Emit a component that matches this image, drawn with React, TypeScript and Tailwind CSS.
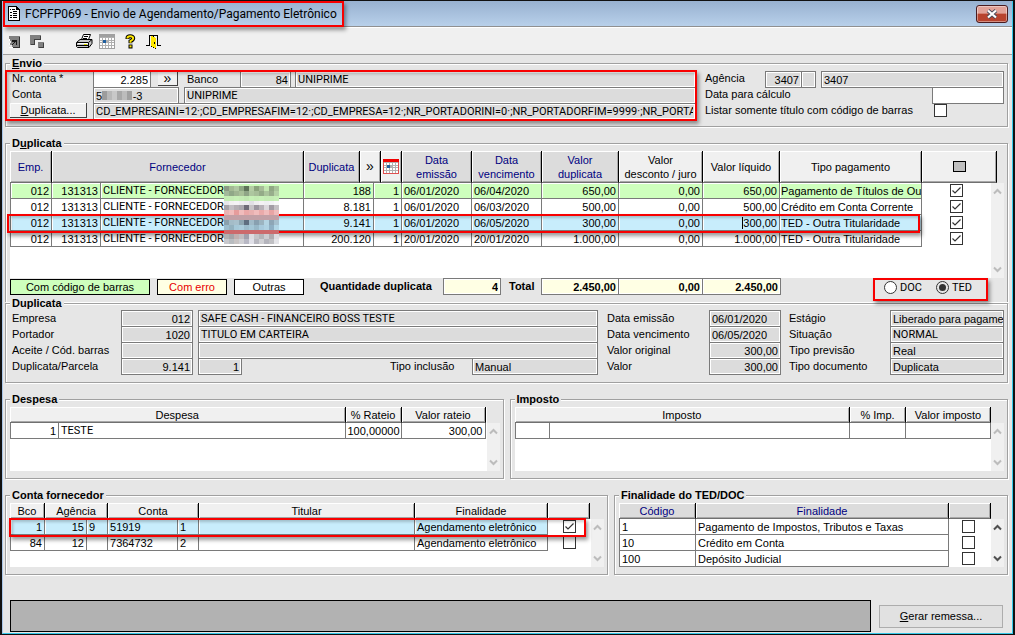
import React, { useState } from 'react';
import clsx from 'clsx';

interface Duplicata {
  numero: string;
  emissao: string;
  vencimento: string;
  valor: string;
  tipo: string;
  color: string;
}

const duplicatas: Duplicata[] = [
  { numero: '188', emissao: '06/01/2020', vencimento: '06/04/2020', valor: '650,00', tipo: 'Pagamento de Títulos de Ou', color: 'bg-[#ceffbd]' },
  { numero: '8.181', emissao: '06/01/2020', vencimento: '06/03/2020', valor: '500,00', tipo: 'Crédito em Conta Corrente', color: 'bg-white' },
  { numero: '9.141', emissao: '06/01/2020', vencimento: '06/05/2020', valor: '300,00', tipo: 'TED - Outra Titularidade', color: 'bg-[#c8edfc]' },
  { numero: '200.120', emissao: '20/01/2020', vencimento: '20/01/2020', valor: '1.000,00', tipo: 'TED - Outra Titularidade', color: 'bg-white' },
];

const contas = [
  { bco: '1', agencia: '15', dvAgencia: '9', conta: '51919', dvConta: '1', checked: true, color: 'bg-[#c8edfc]' },
  { bco: '84', agencia: '12', dvAgencia: '', conta: '7364732', dvConta: '2', checked: false, color: 'bg-white' },
];

const finalidades = [
  { codigo: '1', nome: 'Pagamento de Impostos, Tributos e Taxas' },
  { codigo: '10', nome: 'Crédito em Conta' },
  { codigo: '100', nome: 'Depósito Judicial' },
];

// supplier names are censored with a pixel mosaic
const mosaic = [
  ['#8b9a84', '#a3b994', '#b0c8a2', '#8fa884', '#5f7458', '#b4cca4', '#8ba37c', '#a6bb98', '#c2e6b0', '#90a884', '#a8c49a'],
  ['#a2b89a', '#90a888', '#9fb592', '#a8c098', '#8fa586', '#adc69f', '#a6bd98', '#94ab88', '#aac49c', '#98ae8c', '#b5d2a6'],
  ['#c4ecb4', '#c4ecb4', '#c6f0b6', '#c4ecb4', '#c0e8b0', '#c6f0b6', '#c4ecb4', '#c6f0b6', '#c4ecb4', '#c4ecb4', '#c6f0b6'],
  ['#e8e6ea', '#f2f0f2', '#f4f2f6', '#efedf2', '#eceaf0', '#e2e0e6', '#efedf0', '#f4f2f4', '#efeff2', '#f2f2f4', '#f8f8f8'],
  ['#a8a4aa', '#c2bec4', '#b4aeb4', '#aaa6ae', '#6e6a78', '#c8c4c8', '#9c96a0', '#b8b2b8', '#dcd8dc', '#a29ca4', '#c4c0c4'],
  ['#e8b4b4', '#f0bcbc', '#e69c9c', '#f0bcbc', '#eaa8a8', '#e8b0b0', '#f0bcbc', '#eaaaaa', '#f0bcbc', '#e8a4a4', '#f0bcbc'],
  ['#c2a0a6', '#c2a0a6', '#c2a0a6', '#c2a0a6', '#c2a0a6', '#c2a0a6', '#c2a0a6', '#c2a0a6', '#c2a0a6', '#c2a0a6', '#c2a0a6'],
  ['#8aa0ac', '#a4bcc8', '#a8c0cc', '#8ea6b2', '#5e6e80', '#a0bac8', '#88a0b0', '#9cb4c0', '#b4d4e2', '#8ea6b6', '#a6c0ce'],
  ['#9cbccc', '#94b2c0', '#a6c8d8', '#aaccdc', '#9cbccc', '#a4c6d6', '#98b8c8', '#a8cadc', '#b0d2e2', '#90b0c4', '#b2d6e6'],
  ['#cc6a6c', '#cc6a6c', '#cc6a6c', '#cc6a6c', '#cc6a6c', '#cc6a6c', '#cc6a6c', '#cc6a6c', '#cc6a6c', '#cc6a6c', '#cc6a6c'],
  ['#b0b0b0', '#a4a4a8', '#c0b0b0', '#c0bcc0', '#a0a0ac', '#dcdce0', '#c4c4c8', '#b4b4b8', '#ccccd0', '#b0acb0', '#dcdce0'],
  ['#c8c8cc', '#b8bcc0', '#c8c4c4', '#d0d0d4', '#b8b8c4', '#e0e0e8', '#b8b8c0', '#d0d0d4', '#b4b4bc', '#c0c0c4', '#e4e4e8'],
];

const caps = 'font-[family-name:Roboto]';

interface GroupProps {
  title: React.ReactNode;
  className?: string;
  children: React.ReactNode;
}

const Group: React.FC<GroupProps> = ({ title, className, children }) => (
  <fieldset className={clsx('min-w-0 border border-[#a0a0a0] pl-1 pr-[3px] shadow-[1px_1px_0_#fff,inset_1px_1px_0_#fff]', className)}>
    <legend className="bg-[#e6e6e6] px-0.5 leading-[14px] font-bold">{title}</legend>
    {children}
  </fieldset>
);

interface FieldProps {
  id?: string;
  label?: string;
  value?: string;
  className?: string;
}

const Field: React.FC<FieldProps> = ({ id, label, value = '', className }) => (
  <input
    id={id}
    aria-label={label}
    type="text"
    defaultValue={value}
    className={clsx('h-[17px] min-w-0 border border-[#7a7a7a] px-0.5 shadow-[inset_0_0_0_1px_#fff] outline-none', className)}
  />
);

const Check: React.FC<{ id?: string; label?: string; checked?: boolean }> = ({ id, label, checked }) => (
  <span className="relative inline-block size-[13px] align-top">
    <input id={id} aria-label={label} type="checkbox" defaultChecked={checked} className="peer block size-[13px] appearance-none border border-[#333] bg-white" />
    <svg viewBox="0 0 13 13" className="pointer-events-none absolute inset-0 hidden size-[13px] peer-checked:block">
      <path d="M2.5 6.5 5 9l5.5-5.5" fill="none" stroke="#333" strokeWidth="1.2" />
    </svg>
  </span>
);

const Highlight: React.FC<{ className: string }> = ({ className }) => (
  <div className={clsx('pointer-events-none absolute z-10 border-2 border-[#f80000] shadow-[2px_3px_4px_rgba(0,0,0,0.4),inset_2px_2px_3px_rgba(0,0,0,0.2)]', className)} />
);

interface ThProps {
  blue?: boolean;
  colSpan?: number;
  className?: string;
  children?: React.ReactNode;
}

const Th: React.FC<ThProps> = ({ blue, colSpan, className, children }) => (
  <th
    colSpan={colSpan}
    className={clsx(
      'border-r border-b border-r-black border-b-[#707070] p-0 font-normal shadow-[inset_1px_1px_0_#fff,inset_-1px_-1px_0_#a8a8a8]',
      blue ? 'bg-[#dcdcdc] text-[#000080]' : 'bg-[#f0f0f0]',
      className,
    )}
  >
    {children}
  </th>
);

interface TdProps {
  right?: boolean;
  colSpan?: number;
  className?: string;
  children?: React.ReactNode;
}

const Td: React.FC<TdProps> = ({ right, colSpan, className, children }) => (
  <td
    colSpan={colSpan}
    className={clsx(
      'overflow-hidden border-r border-b border-[#7a7a7a] px-0.5 pt-px pb-0 leading-[14px] whitespace-nowrap shadow-[inset_1px_1px_0_#fff] first:border-l',
      right && 'text-right',
      className,
    )}
  >
    {children}
  </td>
);

const Scroll: React.FC<{ className: string; active?: boolean }> = ({ className, active }) => (
  <div className={clsx('absolute right-0 bottom-0 flex w-[13px] flex-col items-center justify-between bg-[#f0f0f0] py-1', active ? 'text-[#505050]' : 'text-[#bcbcbc]', className)}>
    <svg width="9" height="9" viewBox="0 0 9 9"><path d="M1 6.5 4.5 3 8 6.5" fill="none" stroke="currentColor" strokeWidth="2" /></svg>
    <svg width="9" height="9" viewBox="0 0 9 9"><path d="M1 2.5 4.5 6 8 2.5" fill="none" stroke="currentColor" strokeWidth="2" /></svg>
  </div>
);

const Corner: React.FC<{ className: string }> = ({ className }) => (
  <div className={clsx('absolute top-0 right-0 bg-[#e6e6e6]', className)} />
);

const CalendarIcon: React.FC<{ top?: string }> = ({ top = '#a0a0a0' }) => (
  <svg width="16" height="15" viewBox="0 0 16 15" shapeRendering="crispEdges">
    <path fill={top === '#a0a0a0' ? top : '#e05050'} d="M0 0h16v15H0z" />
    <path fill="#b0b0b0" d="M1 3h14v11H1z" />
    <path fill="#fff" d="M1 4h2v2H1zM4 4h2v2H4zM7 4h2v2H7zM10 4h2v2h-2zM13 4h2v2h-2zM1 7h2v1H1zM4 7h2v1H4zM10 7h2v1h-2zM13 7h2v1h-2zM1 9h2v2H1zM4 9h2v2H4zM7 9h2v2H7zM10 9h2v2h-2zM13 9h2v2h-2zM1 12h2v2H1zM4 12h2v2H4zM7 12h2v2H7zM10 12h2v2h-2zM13 12h2v2h-2z" />
    <path fill={top} d="M0 0h16v3H0z" />
    <path fill="#1f5f9f" d="M4 6h3v3H4z" />
  </svg>
);

const toolButtons = [
  {
    label: 'Restaurar',
    className: 'w-[12px]',
    icon: (
      <svg width="12" height="12" viewBox="0 0 12 12" shapeRendering="crispEdges">
        <path fill="#808080" d="M0 0h11v11H0z" />
        <path fill="#303030" d="M10 1h1v11H3v-1h7z" />
        <path fill="#fff" d="M0 3h1v9H0zM1 11h3v1H1z" />
        <path fill="#1a1a1a" d="M3 4h5v5H7V6H6v1H5v1H4v1H3v1H2V9h1V8h1V7h1V6H3z" />
        <path fill="#e8e8e8" d="M0 5h2v2H0zM0 9h3v2H0z" />
      </svg>
    ),
  },
  {
    label: 'Janelas',
    className: 'ml-[9px] w-[15px]',
    icon: (
      <svg width="15" height="14" viewBox="0 0 15 14" shapeRendering="crispEdges">
        <path fill="#808080" d="M0 0h11v5H5v5H0z" />
        <path fill="#404040" d="M10 1h1v4H5v5H1V9h3V4h6z" />
        <path fill="#808080" d="M8 7h6v6H8z" />
        <path fill="#404040" d="M13 8h1v5H9v-1h4z" />
      </svg>
    ),
  },
  {
    label: 'Imprimir',
    className: 'ml-[31px] w-[17px]',
    icon: (
      <svg width="17" height="15" viewBox="0 0 17 15">
        <path fill="#fff" stroke="#000" d="M5.5 5.5 7.500 .5h7l-2 5z" />
        <path stroke="#000" d="M8 2.500h4M7 4.500h4" />
        <path fill="#c8c8c8" stroke="#000" d="M.5 8.500 4 5.500h10l2 0v4l-3 4H1.500l-1-1z" />
        <path stroke="#000" d="M1 8.500h11.500L16 5.500M12.500 9v4M1 11.500h11" fill="none" />
        <path fill="#fff" d="M2 9h10v1H2z" />
        <path fill="#d8d800" d="M8 10h3v1H8z" />
      </svg>
    ),
  },
  { label: 'Calendário', className: 'ml-[6px] w-[16px]', icon: <CalendarIcon /> },
  {
    label: 'Ajuda',
    className: 'ml-[10px] w-[11px]',
    icon: (
      <svg width="11" height="15" viewBox="0 0 11 15">
        <path fill="none" stroke="#000" strokeWidth="4" d="M2.500 5V4Q2.500 2.200 5.200 2.200T8.200 4.200Q8.200 5.800 5.500 7.200V9.200" />
        <path fill="#000" d="M3.500 10.500h4v4h-4z" />
        <path fill="none" stroke="#ffe800" strokeWidth="2" d="M2.500 4.600V4Q2.500 2.200 5.200 2.200T8.200 4.200Q8.200 5.800 5.500 7.200V8.800" />
        <path fill="#ffe800" d="M4.500 11.400h2v2h-2z" />
      </svg>
    ),
  },
  {
    label: 'Sair',
    className: 'ml-[10px] w-[15px]',
    icon: (
      <svg width="15" height="14" viewBox="0 0 15 14" shapeRendering="crispEdges">
        <path fill="#000" d="M3 0h9v10h3v1h-4v-1H4v1H0v-1h3z" />
        <path fill="#f0f0f0" d="M8 1h3v9H8zM4 1h1v9H4z" />
        <path fill="#000" d="M4 1h1v11h2v1h2v1h1V3H8V2H6V1z" />
        <path fill="#ffe800" d="M5 1h2v1h2v1h1v10H8v-1H6v-1H5z" />
        <path fill="#000" d="M8 7h1v2H8z" />
      </svg>
    ),
  },
];

const App: React.FC = () => {
  const [modo, setModo] = useState('TED');

  return (
    <div className="flex min-h-screen flex-col border-t border-r-2 border-b border-l-2 border-[#111] bg-[#e6e6e6] font-['Liberation_Sans',Arial,sans-serif] text-[11px] leading-[14px] text-black">
      <div className="flex flex-1 flex-col border-r border-b border-l border-[#35c8e8] border-l-[#a9c6e8]">
        <header className="flex h-[26px] items-center justify-between border-b border-[#909090] bg-linear-to-b from-[#98b1d0] to-[#b8d0ea] pr-1">
          <h1 className="z-10 flex h-[26px] w-[341px] items-center gap-[5px] border-2 border-[#f80000] pl-[3px] font-['Roboto',sans-serif] text-[12px] whitespace-nowrap shadow-[2px_3px_4px_rgba(0,0,0,0.4)]">
            <svg width="12" height="15" viewBox="0 0 12 15" shapeRendering="crispEdges" className="shrink-0">
              <path fill="#000" d="M0 0h9v1h1v1h1v1h1v12H0z" />
              <path fill="#fff" d="M1 1h7v3h3v10H1z" />
              <path fill="#000" d="M2 3h1v1H2zM4 3h3v1H4zM5 5h4v1H5zM2 6h2v1H2zM5 7h4v1H5zM2 9h2v1H2zM5 9h4v1H5zM2 11h2v1H2zM5 11h4v1H5z" />
            </svg>
            FCPFP069 - Envio de Agendamento/Pagamento Eletrônico
          </h1>
          <button aria-label="Fechar" className="flex h-[18px] w-8 items-center justify-center rounded-[3px] border border-[#4a1c20] bg-linear-to-b from-[#e2a298] from-45% to-[#b8432e] to-50% shadow-[inset_0_0_0_1px_rgba(255,255,255,0.4)]">
            <svg width="12" height="10" viewBox="0 0 12 10">
              <path d="M2 1.500l8 7M10 1.500l-8 7" stroke="#4a4a5a" strokeWidth="4" />
              <path d="M2 1.500l8 7M10 1.500l-8 7" stroke="#fff" strokeWidth="2.200" />
            </svg>
          </button>
        </header>

        <div className="flex h-7 items-center border-t border-b border-t-white border-b-[#a0a0a0] bg-[#f0f0f0] pt-px pl-[6px]">
          {toolButtons.map((b) => (
            <button key={b.label} aria-label={b.label} className={clsx('flex h-5 items-center', b.className)}>{b.icon}</button>
          ))}
        </div>

        <main className="flex flex-1 flex-col px-0.5 pt-px pr-1">
          <Group title={<><u>E</u>nvio</>} className="pb-[7px]">
            <div className="flex pt-px">
              <div className="relative min-w-0 flex-1">
                <Highlight className="-top-px -right-px -bottom-[2px] -left-[5px]" />
                <div className="flex h-4">
                  <label htmlFor="nr-conta" className="w-[83px] pl-0.5">Nr. conta *</label>
                  <Field id="nr-conta" value="2.285" className="w-[58px] bg-white text-right" />
                  <button aria-label="Buscar conta" className="ml-[7px] flex h-[15px] w-5 items-center justify-center border-r border-b border-[#404040] bg-[#f0f0f0] text-[14px] leading-3">»</button>
                  <label htmlFor="banco" className="w-[62px] border-t border-[#a0a0a0] pl-[9px]">Banco</label>
                  <Field id="banco" value="84" className="w-[51px] bg-[#dcdcdc] text-right" />
                  <Field label="Nome do banco" value="UNIPRIME" className={clsx('ml-1 flex-1 bg-[#dcdcdc]', caps)} />
                </div>
                <div className="flex h-4">
                  <label htmlFor="conta" className="w-[83px] pl-0.5">Conta</label>
                  <div className="relative w-[86px]">
                    <Field id="conta" value={'5\u00a0\u00a0\u00a0\u00a0\u00a0\u00a0\u00a0\u00a0\u00a0\u00a0-3'} className="w-full bg-[#dcdcdc]" />
                    <div className="absolute top-[4px] left-[9px] flex h-[9px] w-[30px]">
                      <span className="flex-1 bg-[#9c9c9c]" />
                      <span className="flex-1 bg-[#b8b8b8]" />
                      <span className="flex-1 bg-[#c8c8c8]" />
                      <span className="flex-1 bg-[#a8a8a8]" />
                      <span className="flex-1 bg-[#bcbcbc]" />
                      <span className="flex-1 bg-[#a0a0a0]" />
                    </div>
                  </div>
                  <Field label="Nome da conta" value="UNIPRIME" className={clsx('ml-[5px] flex-1 bg-[#dcdcdc]', caps)} />
                </div>
                <div className="flex h-4">
                  <button className="h-[15px] w-[77px] border-r border-b border-[#404040] bg-[#f0f0f0] leading-[14px] shadow-[inset_1px_1px_0_#fff]"><u>D</u>uplicata...</button>
                  <Field
                    label="Filtro de duplicatas"
                    value="CD_EMPRESAINI=12·;CD_EMPRESAFIM=12·;CD_EMPRESA=12·;NR_PORTADORINI=0·;NR_PORTADORFIM=9999·;NR_PORTAD"
                    className={clsx('ml-[6px] flex-1 bg-[#dcdcdc]', caps)}
                  />
                </div>
              </div>
              <div className="ml-[9px] w-[299px]">
                <div className="flex h-4">
                  <label htmlFor="agencia" className="w-[60px]">Agência</label>
                  <Field id="agencia" value="3407" className="w-[37px] bg-[#dcdcdc] text-right" />
                  <Field label="Dígito da agência" className="-ml-px w-[15px] bg-[#dcdcdc]" />
                  <Field label="Nome da agência" value="3407" className="ml-[5px] flex-1 bg-[#dcdcdc]" />
                </div>
                <div className="flex h-4 justify-between">
                  <label htmlFor="data-calculo">Data para cálculo</label>
                  <Field id="data-calculo" className="w-[72px] bg-white" />
                </div>
                <div className="flex h-4">
                  <label htmlFor="listar" className="w-[229px]">Listar somente título com código de barras</label>
                  <span className="pt-px"><Check id="listar" /></span>
                </div>
              </div>
            </div>
          </Group>

          <Group title={<>D<u>u</u>plicata</>} className="mt-[9px] border-b-0 pb-[7px]">
            <div className="relative mt-px min-h-[127px] bg-white pr-[7px]">
              <Corner className="h-8 w-[7px]" />
              <Scroll className="top-8" />
              <Highlight className="top-[63px] right-[84px] -left-[3px] h-[19px]" />
              <svg width="55" height="58" viewBox="0 0 55 60" preserveAspectRatio="none" shapeRendering="crispEdges" className="absolute top-[35px] left-[214px] z-20">
                {mosaic.map((row, y) => row.map((fill, x) => <rect key={`${x}-${y}`} x={x * 5} y={y * 5} width="5" height="5" fill={fill} />))}
              </svg>
              <table className="w-full table-fixed border-separate border-spacing-0">
                <colgroup>
                  <col className="w-[42px]" />
                  <col className="w-[49px]" />
                  <col />
                  <col className="w-[56px]" />
                  <col className="w-[14px]" />
                  <col className="w-[7px]" />
                  <col className="w-[21px]" />
                  <col className="w-[70px]" />
                  <col className="w-[70px]" />
                  <col className="w-[77px]" />
                  <col className="w-[84px]" />
                  <col className="w-[77px]" />
                  <col className="w-[142px]" />
                  <col className="w-[75px]" />
                </colgroup>
                <thead>
                  <tr className="h-8">
                    <Th blue>Emp.</Th>
                    <Th blue colSpan={2}>Fornecedor</Th>
                    <Th blue>Duplicata</Th>
                    <Th colSpan={2}><button aria-label="Buscar duplicata" className="text-[14px]">»</button></Th>
                    <Th><button aria-label="Calendário" className="flex w-full justify-center"><CalendarIcon top="#f00000" /></button></Th>
                    <Th blue>Data<br />emissão</Th>
                    <Th blue>Data<br />vencimento</Th>
                    <Th blue>Valor<br />duplicata</Th>
                    <Th>Valor<br />desconto / juro</Th>
                    <Th>Valor líquido</Th>
                    <Th>Tipo pagamento</Th>
                    <Th><button aria-label="Marcar todos" className="mx-auto block h-[11px] w-[13px] border border-black bg-[#c0c0c0]" /></Th>
                  </tr>
                </thead>
                <tbody>
                  {duplicatas.map((d, i) => (
                    <tr key={d.numero} className="h-4">
                      <Td right className={d.color}>012</Td>
                      <Td right className={d.color}>131313</Td>
                      <Td className={clsx(d.color, caps)}>CLIENTE - FORNECEDOR</Td>
                      <Td right colSpan={2} className={d.color}>{d.numero}</Td>
                      <Td right colSpan={2} className={d.color}>1</Td>
                      <Td className={d.color}>{d.emissao}</Td>
                      <Td className={d.color}>{d.vencimento}</Td>
                      <Td right className={d.color}>{d.valor}</Td>
                      <Td right className={d.color}>0,00</Td>
                      <Td right className={d.color}>
                        {i === 2 ? <span className="border-l border-black">{d.valor}</span> : d.valor}
                      </Td>
                      <Td className={clsx('pr-0 pl-px', d.color)}>{d.tipo}</Td>
                      <td className="p-0 pt-px pr-[7px] text-center align-top leading-[14px]"><Check label={`Selecionar ${d.numero}`} checked /></td>
                    </tr>
                  ))}
                </tbody>
              </table>
            </div>
            <div className="flex h-[17px] items-start">
              <span className="mt-px w-[140px] border border-black bg-[#ceffbd] text-center">Com código de barras</span>
              <span className="mt-px ml-[7px] w-[70px] border border-black bg-[#ffffe4] text-center text-[#e80000]">Com erro</span>
              <span className="mt-px ml-[7px] w-[70px] border border-black bg-white text-center">Outras</span>
              <label htmlFor="quantidade" className="ml-4 w-[123px] pt-px font-bold">Quantidade duplicata</label>
              <Field id="quantidade" value="4" className="w-[58px] bg-[#ffffe4] text-right font-bold" />
              <label htmlFor="total" className="ml-2 w-8 pt-px font-bold">Total</label>
              <Field id="total" value="2.450,00" className="w-[78px] bg-[#ffffe4] text-right font-bold" />
              <Field label="Total desconto" value="0,00" className="-ml-px w-[85px] bg-[#ffffe4] text-right font-bold" />
              <Field label="Total líquido" value="2.450,00" className="-ml-px w-[79px] bg-[#ffffe4] text-right font-bold" />
              <div className="z-10 mr-4 ml-auto flex h-[23px] w-[115px] shrink-0 items-center gap-[14px] border-2 border-[#f80000] pb-1 pl-[9px] shadow-[2px_3px_4px_rgba(0,0,0,0.4)]">
                {['DOC', 'TED'].map((m) => (
                  <label key={m} className={clsx('flex items-center gap-[3px]', caps)}>
                    <input
                      type="radio"
                      name="modo"
                      checked={modo === m}
                      onChange={() => setModo(m)}
                      className="size-[13px] appearance-none rounded-full border border-[#333] bg-white p-0.5 checked:bg-[#333] checked:bg-clip-content"
                    />
                    {m}
                  </label>
                ))}
              </div>
            </div>
          </Group>

          <Group title="Duplicata" className="-mt-[6px] pb-2">
            <div className="flex">
              <div className="flex-1">
                <div className="flex h-4">
                  <label htmlFor="empresa" className="w-[111px] pt-px pl-0.5">Empresa</label>
                  <Field id="empresa" value="012" className="w-[72px] bg-[#dcdcdc] text-right" />
                  <Field label="Nome da empresa" value="SAFE CASH - FINANCEIRO BOSS TESTE" className={clsx('ml-[5px] flex-1 bg-[#dcdcdc]', caps)} />
                </div>
                <div className="flex h-4">
                  <label htmlFor="portador" className="w-[111px] pt-px pl-0.5">Portador</label>
                  <Field id="portador" value="1020" className="w-[72px] bg-[#dcdcdc] text-right" />
                  <Field label="Nome do portador" value="TITULO EM CARTEIRA" className={clsx('ml-[5px] flex-1 bg-[#dcdcdc]', caps)} />
                </div>
                <div className="flex h-4">
                  <label htmlFor="aceite" className="w-[111px] pt-px pl-0.5">Aceite / Cód. barras</label>
                  <Field id="aceite" className="w-[72px] bg-[#dcdcdc]" />
                  <Field label="Código de barras" className="ml-[5px] flex-1 bg-[#dcdcdc]" />
                </div>
                <div className="flex h-4">
                  <label htmlFor="parcela" className="w-[111px] pt-px pl-0.5">Duplicata/Parcela</label>
                  <Field id="parcela" value="9.141" className="w-[72px] bg-[#dcdcdc] text-right" />
                  <Field label="Parcela" value="1" className="ml-[5px] w-[44px] bg-[#dcdcdc] text-right" />
                  <label htmlFor="inclusao" className="ml-auto w-[82px] pt-px">Tipo inclusão</label>
                  <Field id="inclusao" value="Manual" className="w-[126px] bg-[#dcdcdc]" />
                </div>
              </div>
              <div className="ml-[9px] w-[174px]">
                {[
                  ['Data emissão', '06/01/2020'],
                  ['Data vencimento', '06/05/2020'],
                  ['Valor original', '300,00'],
                  ['Valor', '300,00'],
                ].map(([label, value]) => (
                  <div key={label} className="flex h-4">
                    <label htmlFor={label} className="w-[102px] pt-px">{label}</label>
                    <Field id={label} value={value} className={clsx('w-[72px] bg-[#dcdcdc]', value.includes(',') && 'text-right')} />
                  </div>
                ))}
              </div>
              <div className="ml-2 w-[215px]">
                {[
                  ['Estágio', 'Liberado para pagame'],
                  ['Situação', 'NORMAL'],
                  ['Tipo previsão', 'Real'],
                  ['Tipo documento', 'Duplicata'],
                ].map(([label, value]) => (
                  <div key={label} className="flex h-4">
                    <label htmlFor={label} className="w-[101px] pt-px">{label}</label>
                    <Field id={label} value={value} className={clsx('w-[114px] bg-[#dcdcdc] pr-0', label === 'Situação' && caps)} />
                  </div>
                ))}
              </div>
            </div>
          </Group>

          <div className="mt-[9px] flex gap-[6px]">
            <Group title="Despesa" className="flex-1 pb-[7px]">
              <div className="relative mt-px min-h-[64px] bg-white pr-[14px]">
                <Corner className="h-4 w-[13px]" />
                <Scroll className="top-4" />
                <table className="w-full table-fixed border-separate border-spacing-0">
                  <colgroup>
                    <col className="w-[49px]" />
                    <col />
                    <col className="w-[56px]" />
                    <col className="w-[84px]" />
                  </colgroup>
                  <thead>
                    <tr className="h-4">
                      <Th colSpan={2} className="pt-px">Despesa</Th>
                      <Th className="pt-px">% Rateio</Th>
                      <Th className="pt-px">Valor rateio</Th>
                    </tr>
                  </thead>
                  <tbody>
                    <tr className="h-4">
                      <Td right>1</Td>
                      <Td className={caps}>TESTE</Td>
                      <Td right>100,00000</Td>
                      <Td right>300,00</Td>
                    </tr>
                  </tbody>
                </table>
              </div>
            </Group>
            <Group title="Imposto" className="flex-1 pb-[7px]">
              <div className="relative mt-px min-h-[64px] bg-white pr-[13px]">
                <Corner className="h-4 w-[13px]" />
                <Scroll className="top-4" />
                <table className="w-full table-fixed border-separate border-spacing-0">
                  <colgroup>
                    <col className="w-[35px]" />
                    <col />
                    <col className="w-[56px]" />
                    <col className="w-[85px]" />
                  </colgroup>
                  <thead>
                    <tr className="h-4">
                      <Th colSpan={2} className="pt-px">Imposto</Th>
                      <Th className="pt-px">% Imp.</Th>
                      <Th className="pt-px">Valor imposto</Th>
                    </tr>
                  </thead>
                  <tbody>
                    <tr className="h-4">
                      <Td />
                      <Td />
                      <Td />
                      <Td />
                    </tr>
                  </tbody>
                </table>
              </div>
            </Group>
          </div>

          <div className="mt-[9px] flex gap-[6px]">
            <Group title="Conta fornecedor" className="flex-1 pb-[7px]">
              <div className="relative mt-px min-h-[64px] bg-white pr-[14px]">
                <Corner className="h-4 w-[14px]" />
                <Scroll className="top-4" />
                <Highlight className="top-[15px] right-[18px] -left-px h-[19px]" />
                <table className="w-full table-fixed border-separate border-spacing-0">
                  <colgroup>
                    <col className="w-[35px]" />
                    <col className="w-[42px]" />
                    <col className="w-[21px]" />
                    <col className="w-[70px]" />
                    <col className="w-[21px]" />
                    <col />
                    <col className="w-[133px]" />
                    <col className="w-[42px]" />
                  </colgroup>
                  <thead>
                    <tr className="h-4">
                      <Th className="pt-px">Bco</Th>
                      <Th colSpan={2} className="pt-px">Agência</Th>
                      <Th colSpan={2} className="pt-px">Conta</Th>
                      <Th className="pt-px">Titular</Th>
                      <Th className="pt-px">Finalidade</Th>
                      <Th />
                    </tr>
                  </thead>
                  <tbody>
                    {contas.map((c) => (
                      <tr key={c.bco} className="h-4">
                        <Td right className={c.color}>{c.bco}</Td>
                        <Td right className={c.color}>{c.agencia}</Td>
                        <Td className={c.color}>{c.dvAgencia}</Td>
                        <Td className={c.color}>{c.conta}</Td>
                        <Td className={c.color}>{c.dvConta}</Td>
                        <Td className={c.color} />
                        <Td className={c.color}>Agendamento eletrônico</Td>
                        <td className="p-0 pt-px text-center align-top leading-[14px]"><Check label={`Selecionar conta ${c.conta}`} checked={c.checked} /></td>
                      </tr>
                    ))}
                  </tbody>
                </table>
              </div>
            </Group>
            <Group title="Finalidade do TED/DOC" className="w-[394px] pb-[7px]">
              <div className="relative mt-px min-h-[64px] bg-white pr-[13px]">
                <Corner className="h-4 w-[13px]" />
                <Scroll className="top-4" active />
                <table className="w-full table-fixed border-separate border-spacing-0">
                  <colgroup>
                    <col className="w-[77px]" />
                    <col />
                    <col className="w-[42px]" />
                  </colgroup>
                  <thead>
                    <tr className="h-4">
                      <Th blue className="pt-px">Código</Th>
                      <Th blue className="pt-px">Finalidade</Th>
                      <Th blue />
                    </tr>
                  </thead>
                  <tbody>
                    {finalidades.map((f) => (
                      <tr key={f.codigo} className="h-4">
                        <Td>{f.codigo}</Td>
                        <Td>{f.nome}</Td>
                        <td className="p-0 pt-px pr-1 text-center align-top leading-[14px]"><Check label={f.nome} /></td>
                      </tr>
                    ))}
                  </tbody>
                </table>
              </div>
            </Group>
          </div>

          <div className="mt-auto flex items-center gap-2 pt-5 pr-[5px] pb-px pl-[5px]">
            <div role="progressbar" aria-label="Progresso" className="h-8 flex-1 border border-black bg-[#b2b2b2]" />
            <button className="h-[23px] w-[124px] border border-[#adadad] bg-[#e1e1e1]"><u>G</u>erar remessa...</button>
          </div>
        </main>
      </div>
    </div>
  );
};

export default App;
